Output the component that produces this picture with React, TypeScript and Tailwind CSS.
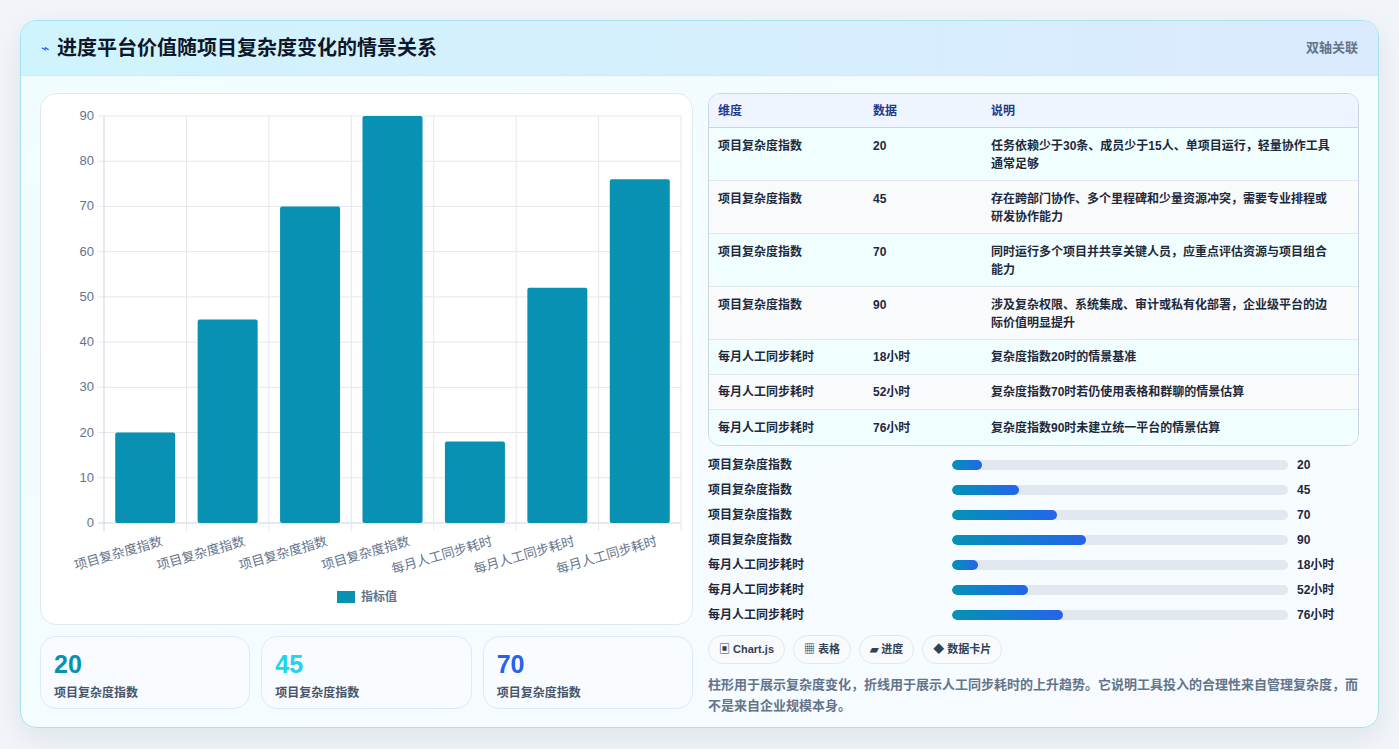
import React from 'react';

const FONT = { fontFamily: '"Liberation Sans", "Noto Sans CJK SC", sans-serif' };

const BARS = [
  { label: '项目复杂度指数', v: 20 },
  { label: '项目复杂度指数', v: 45 },
  { label: '项目复杂度指数', v: 70 },
  { label: '项目复杂度指数', v: 90 },
  { label: '每月人工同步耗时', v: 18 },
  { label: '每月人工同步耗时', v: 52 },
  { label: '每月人工同步耗时', v: 76 },
];

const ROWS = [
  ['项目复杂度指数', '20', '任务依赖少于30条、成员少于15人、单项目运行，轻量协作工具通常足够'],
  ['项目复杂度指数', '45', '存在跨部门协作、多个里程碑和少量资源冲突，需要专业排程或研发协作能力'],
  ['项目复杂度指数', '70', '同时运行多个项目并共享关键人员，应重点评估资源与项目组合能力'],
  ['项目复杂度指数', '90', '涉及复杂权限、系统集成、审计或私有化部署，企业级平台的边际价值明显提升'],
  ['每月人工同步耗时', '18小时', '复杂度指数20时的情景基准'],
  ['每月人工同步耗时', '52小时', '复杂度指数70时若仍使用表格和群聊的情景估算'],
  ['每月人工同步耗时', '76小时', '复杂度指数90时未建立统一平台的情景估算'],
];

function Chart() {
  const x0 = 63, x1 = 640, y0 = 22, y1 = 429;
  const step = (x1 - x0) / 7;
  const yOf = (v: number) => y1 - (v / 90) * (y1 - y0);
  return (
    <svg width="652" height="532" style={FONT}>
      {[0, 10, 20, 30, 40, 50, 60, 70, 80, 90].map((t) => (
        <g key={t}>
          <line x1={x0 - 6} x2={x1} y1={yOf(t)} y2={yOf(t)} stroke={t === 0 ? '#cbd5e1' : '#e5e7eb'} />
          <text x={x0 - 10} y={yOf(t) + 4} textAnchor="end" fontSize="13" fill="#64748b">{t}</text>
        </g>
      ))}
      {Array.from({ length: 8 }).map((_, i) => (
        <line key={i} x1={x0 + i * step} x2={x0 + i * step} y1={y0} y2={y1 + 8} stroke={i === 0 ? '#cbd5e1' : '#e5e7eb'} />
      ))}
      {BARS.map((b, i) => {
        const cx = x0 + step * i + step / 2;
        return (
          <g key={i}>
            <rect x={cx - 30} y={yOf(b.v)} width="60" height={y1 - yOf(b.v)} rx="2" fill="#0891b2" />
            <text transform={`translate(${cx + 18},${y1 + 22}) rotate(-16)`} textAnchor="end" fontSize="13" fill="#64748b">{b.label}</text>
          </g>
        );
      })}
      <rect x="296" y="497" width="18" height="12" fill="#0891b2" />
      <text x="320" y="507" fontSize="12" fontWeight="bold" fill="#64748b">指标值</text>
    </svg>
  );
}

export default function App() {
  return (
    <div style={FONT} className="w-[1399px] h-[749px] bg-[#f1f5f9] pt-5 px-5">
      <div className="rounded-2xl border border-[#a5e4ee] bg-gradient-to-br from-[#f0fdff] to-[#f8fbff] shadow-[0_10px_30px_rgba(15,23,42,0.08)] overflow-hidden h-[708px]">
        <div className="h-[55px] flex items-center justify-between px-5 bg-gradient-to-r from-[#cff4fc] to-[#dbeafe] border-b border-[#c7eef6]">
          <div className="flex items-center gap-2">
            <span className="text-[#2563eb] text-sm">⌁</span>
            <span className="text-[20px] font-bold text-[#0f172a]">进度平台价值随项目复杂度变化的情景关系</span>
          </div>
          <span className="text-[13px] font-bold text-[#64748b]">双轴关联</span>
        </div>
        <div className="flex gap-[15px] px-[19px] pt-[17px]">
          <div className="w-[653px] flex flex-col gap-[11px]">
            <div className="h-[532px] rounded-2xl border border-[#e2e8f0] bg-white">
              <Chart />
            </div>
            <div className="grid grid-cols-3 gap-[11px]">
              {[
                ['20', 'text-[#0891b2]'],
                ['45', 'text-[#22d3ee]'],
                ['70', 'text-[#2563eb]'],
              ].map(([v, c], i) => (
                <div key={i} className="h-[73px] rounded-2xl border border-[#dbeafe] bg-[#f8fbff] px-[13px] pt-[11px]">
                  <div className={`text-[25px] font-bold leading-8 ${c}`}>{v}</div>
                  <div className="text-[12px] font-bold text-[#475569] mt-1">项目复杂度指数</div>
                </div>
              ))}
            </div>
          </div>
          <div className="w-[652px]">
            <div className="rounded-xl border border-[#cbd5e1] overflow-hidden bg-white">
              <div className="grid grid-cols-[155px_118px_1fr] h-[34px] items-center px-[9px] bg-[#eef5ff] border-b border-[#cbd5e1] text-[12px] font-bold text-[#1e3a8a]">
                <span>维度</span><span>数据</span><span>说明</span>
              </div>
              {ROWS.map((r, i) => (
                <div key={i} className={`grid grid-cols-[155px_118px_1fr] px-[9px] text-[12px] font-bold text-[#1e293b] border-b last:border-b-0 border-[#e2e8f0] ${i % 2 === 0 ? 'bg-[#f0feff]' : 'bg-[#f8fafc]'} ${i < 4 ? 'h-[53px] pt-[9px]' : 'h-[35px] items-center'}`}>
                  <span>{r[0]}</span><span>{r[1]}</span><span className="leading-[18px] pr-3">{r[2]}</span>
                </div>
              ))}
            </div>
            <div className="mt-[10px] flex flex-col gap-[7px]">
              {BARS.map((b, i) => (
                <div key={i} className="flex items-center h-[18px] text-[12px] font-bold text-[#1e293b]">
                  <span className="w-[244px]">{b.label}</span>
                  <div className="w-[336px] h-[10px] rounded-full bg-[#e2e8f0] overflow-hidden">
                    <div className="h-full rounded-full bg-gradient-to-r from-[#0891b2] to-[#2563eb]" style={{ width: `${(i < 4 ? b.v / 90 * 40 : b.v / 76 * 33)}%` }} />
                  </div>
                  <span className="ml-[9px]">{i < 4 ? b.v : `${b.v}小时`}</span>
                </div>
              ))}
            </div>
            <div className="flex gap-2 mt-[11px]">
              {['▣ Chart.js', '▦ 表格', '▰ 进度', '◆ 数据卡片'].map((t) => (
                <span key={t} className="h-[29px] px-[10px] flex items-center rounded-full border border-[#e2e8f0] bg-[#f8fafc] text-[11px] font-bold text-[#334155]">{t}</span>
              ))}
            </div>
            <p className="mt-[10px] text-[13px] font-bold leading-[21px] text-[#64748b]">
              柱形用于展示复杂度变化，折线用于展示人工同步耗时的上升趋势。它说明工具投入的合理性来自管理复杂度，而不是来自企业规模本身。
            </p>
          </div>
        </div>
      </div>
    </div>
  );
}
